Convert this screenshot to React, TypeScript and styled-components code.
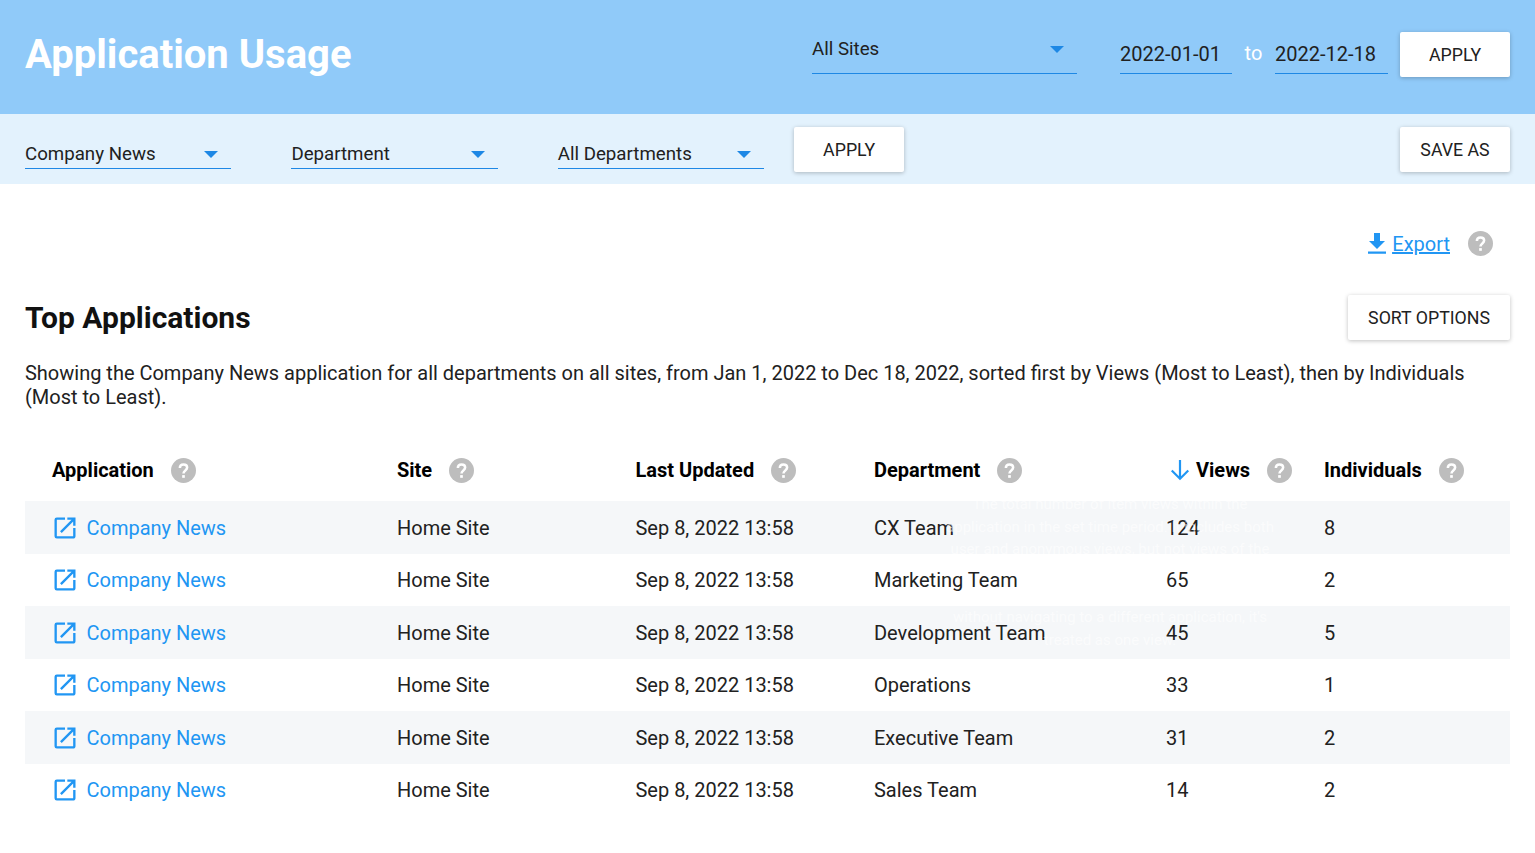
import React from 'react';
import styled, { createGlobalStyle } from 'styled-components';

const rows = [
    { department: 'CX Team', views: 124, individuals: 8 },
    { department: 'Marketing Team', views: 65, individuals: 2 },
    { department: 'Development Team', views: 45, individuals: 5 },
    { department: 'Operations', views: 33, individuals: 1 },
    { department: 'Executive Team', views: 31, individuals: 2 },
    { department: 'Sales Team', views: 14, individuals: 2 },
];

const HelpIcon: React.FC = () => (
    <HelpSvg viewBox="0 0 26 26">
        <circle cx="13" cy="13" r="13" fill="#bdbdbd" />
        <path d="M9.200 10.400c0-2.400 1.600-3.700 3.800-3.700s3.800 1.200 3.800 3.300c0 3-3.800 2.900-3.800 6" fill="none" stroke="#fff" strokeWidth="2.600" />
        <rect x="11.600" y="17.800" width="2.800" height="2.800" fill="#fff" />
    </HelpSvg>
);

const OpenIcon: React.FC = () => (
    <OpenSvg viewBox="0 0 24 24">
        <path d="M19 19H5V5h7V3H5a2 2 0 0 0-2 2v14a2 2 0 0 0 2 2h14c1.100 0 2-.9 2-2v-7h-2v7zM14 3v2h3.590l-9.830 9.830 1.410 1.410L19 6.410V10h2V3h-7z" fill="#2196f3" />
    </OpenSvg>
);

const Select: React.FC<{ label: string; inHeader?: boolean }> = ({ label, inHeader }) => (
    <SelectBox $inHeader={inHeader}>
        <span>{label}</span>
        <Caret />
    </SelectBox>
);

const App: React.FC = () => (
    <>
        <GlobalStyle />
        <Header>
            <Title>Application Usage</Title>
            <HeaderControls>
                <Select label="All Sites" inHeader />
                <DateRange>
                    <DateField>2022-01-01</DateField>
                    <To>to</To>
                    <DateField>2022-12-18</DateField>
                </DateRange>
                <Button>APPLY</Button>
            </HeaderControls>
        </Header>
        <SubBar>
            <Filters>
                <Select label="Company News" />
                <Select label="Department" />
                <Select label="All Departments" />
                <Button>APPLY</Button>
            </Filters>
            <Button>SAVE AS</Button>
        </SubBar>
        <Main>
            <ExportRow>
                <ExportLink href="#">
                    <ExportSvg viewBox="0 0 18 22">
                        <path d="M6 0h6v8h5l-8 8-8-8h5z M0 18.500h18v2.300H0z" fill="#2196f3" />
                    </ExportSvg>
                    <span>Export</span>
                </ExportLink>
                <HelpIcon />
            </ExportRow>
            <TitleRow>
                <SectionTitle>Top Applications</SectionTitle>
                <Button>SORT OPTIONS</Button>
            </TitleRow>
            <Summary>
                Showing the Company News application for all departments on all sites, from Jan 1, 2022 to Dec 18, 2022, sorted first by Views (Most to Least), then by Individuals (Most to Least).
            </Summary>
            <Table>
                <HeadRow>
                    <HeadCell>Application<HelpIcon /></HeadCell>
                    <HeadCell>Site<HelpIcon /></HeadCell>
                    <HeadCell>Last Updated<HelpIcon /></HeadCell>
                    <HeadCell>Department<HelpIcon /></HeadCell>
                    <ViewsHead>
                        <SortSvg viewBox="0 0 20 20">
                            <path d="M10 1v17M2.500 10.500l7.500 7.500 7.500-7.500" fill="none" stroke="#2196f3" strokeWidth="2" />
                        </SortSvg>
                        Views<HelpIcon />
                    </ViewsHead>
                    <HeadCell>Individuals<HelpIcon /></HeadCell>
                </HeadRow>
                {rows.map((row) => (
                    <Row key={row.department}>
                        <AppCell>
                            <OpenIcon />
                            <AppLink href="#">Company News</AppLink>
                        </AppCell>
                        <span>Home Site</span>
                        <span>Sep 8, 2022 13:58</span>
                        <span>{row.department}</span>
                        <span>{row.views}</span>
                        <span>{row.individuals}</span>
                    </Row>
                ))}
                <FadingTooltip>
                    <p>
                        The total number of item views within the
                        <br />
                        application in the set time period. It includes both
                        <br />
                        user and anonymous views, but not views of the
                    </p>
                    <p>
                        without navigating to a different application, it's
                        <br />
                        treated as one view.
                    </p>
                </FadingTooltip>
            </Table>
        </Main>
    </>
);

const GlobalStyle = createGlobalStyle`
    body {
        margin: 0;
        background: #fff;
        color: #212121;
        font-family: Roboto, 'Liberation Sans', sans-serif;
        font-size: 19.99px;
    }
`;

const Header = styled.header`
    height: 114px;
    box-sizing: border-box;
    padding: 32px 25px 0;
    background: #90caf9;
    display: flex;
    justify-content: space-between;
    align-items: flex-start;
`;

const Title = styled.h1`
    margin: 0;
    color: #fff;
    font-size: 40px;
    font-weight: 700;
    line-height: 45px;
`;

const HeaderControls = styled.div`
    display: flex;
    align-items: flex-start;
`;

const SelectBox = styled.div<{ $inHeader?: boolean }>`
    width: ${(props) => (props.$inHeader ? '265px' : '206.4px')};
    height: 42px;
    box-sizing: border-box;
    border-bottom: 1px solid #1e88e5;
    padding: ${(props) => (props.$inHeader ? '0 13px 8px 0' : '12px 13px 0 0')};
    display: flex;
    align-items: center;
    justify-content: space-between;
    font-size: 18.7px;
    line-height: 24px;
`;

const Caret = styled.i`
    width: 0;
    height: 0;
    margin-top: 2px;
    border-left: 7px solid transparent;
    border-right: 7px solid transparent;
    border-top: 7px solid #1e88e5;
`;

const DateRange = styled.div`
    display: flex;
    align-items: center;
    margin: 0 12px 0 43px;
`;

const DateField = styled.div`
    width: 112px;
    height: 42px;
    box-sizing: border-box;
    border-bottom: 1px solid #1e88e5;
    line-height: 45px;
    font-size: 20px;
    &:last-child {
        width: 113px;
    }
`;

const To = styled.span`
    color: #fff;
    font-size: 20px;
    width: 43px;
    text-align: center;
`;

const Button = styled.button`
    height: 45px;
    padding: 0 20px;
    min-width: 110px;
    background: #fff;
    border: 0;
    border-radius: 2px;
    box-shadow: 0 1px 4px rgba(0, 0, 0, 0.25);
    color: #212121;
    font-family: Roboto, 'Liberation Sans', sans-serif;
    font-size: 17.75px;
    font-weight: 400;
`;

const SubBar = styled.div`
    height: 70px;
    box-sizing: border-box;
    padding: 13px 25px 0;
    background: #e3f2fd;
    display: flex;
    justify-content: space-between;
    align-items: flex-start;
`;

const Filters = styled.div`
    display: flex;
    align-items: flex-start;
    gap: 60px;
    & > button {
        margin-left: -30px;
    }
`;

const Main = styled.main`
    padding: 0 25px;
`;

const ExportRow = styled.div`
    height: 111px;
    box-sizing: border-box;
    padding: 47px 17px 0 0;
    display: flex;
    justify-content: flex-end;
    align-items: flex-start;
    gap: 18px;
`;

const ExportLink = styled.a`
    display: flex;
    align-items: flex-start;
    gap: 6px;
    height: 26px;
    line-height: 26px;
    color: #2196f3;
    font-size: 20px;
    span {
        text-decoration: underline;
    }
`;

const ExportSvg = styled.svg`
    width: 18px;
    height: 22px;
    margin-top: 2px;
`;

const HelpSvg = styled.svg`
    width: 25px;
    height: 25px;
    flex: none;
`;

const TitleRow = styled.div`
    display: flex;
    justify-content: space-between;
    align-items: center;
`;

const SectionTitle = styled.h2`
    margin: 0;
    font-size: 30px;
    font-weight: 700;
    color: #111;
`;

const Summary = styled.p`
    margin: 21px 0 0;
    line-height: 24px;
    color: #212121;
`;

const Table = styled.div`
    position: relative;
    margin-top: 36px;
    display: grid;
    grid-template-columns: 372px 238.5px 238.5px 292px 158px 1fr;
`;

const HeadRow = styled.div`
    display: grid;
    grid-template-columns: subgrid;
    grid-column: 1 / -1;
    height: 56px;
    box-sizing: border-box;
    padding-bottom: 6px;
    align-items: center;
    font-weight: 700;
    color: #000;
    & > div:first-child {
        padding-left: 27px;
    }
`;

const HeadCell = styled.div`
    display: flex;
    align-items: center;
    gap: 17px;
`;

const ViewsHead = styled(HeadCell)`
    gap: 0;
    margin-left: 4px;
    & > svg:last-child {
        margin-left: 17px;
    }
`;

const SortSvg = styled.svg`
    width: 22px;
    height: 22px;
    margin-left: -1px;
    margin-right: 5px;
`;

const Row = styled.div`
    display: grid;
    grid-template-columns: subgrid;
    grid-column: 1 / -1;
    height: 52.5px;
    box-sizing: border-box;
    padding-top: 0.5px;
    align-items: center;
    &:nth-child(even) {
        background: #f5f7f9;
    }
`;

const AppCell = styled.div`
    display: flex;
    align-items: center;
    padding-left: 26px;
    gap: 7.5px;
`;

const OpenSvg = styled.svg`
    width: 28px;
    height: 28px;
    flex: none;
`;

const AppLink = styled.a`
    color: #2196f3;
    text-decoration: none;
`;

/* tooltip caught while fading out, only shows on the tinted rows */
const FadingTooltip = styled.div`
    position: absolute;
    top: 48px;
    left: 905px;
    width: 360px;
    color: #fff;
    opacity: 0.6;
    font-size: 15px;
    line-height: 22.6px;
    text-align: center;
    white-space: nowrap;
    pointer-events: none;
    p {
        margin: 0 0 45.2px;
    }
`;

export default App;
